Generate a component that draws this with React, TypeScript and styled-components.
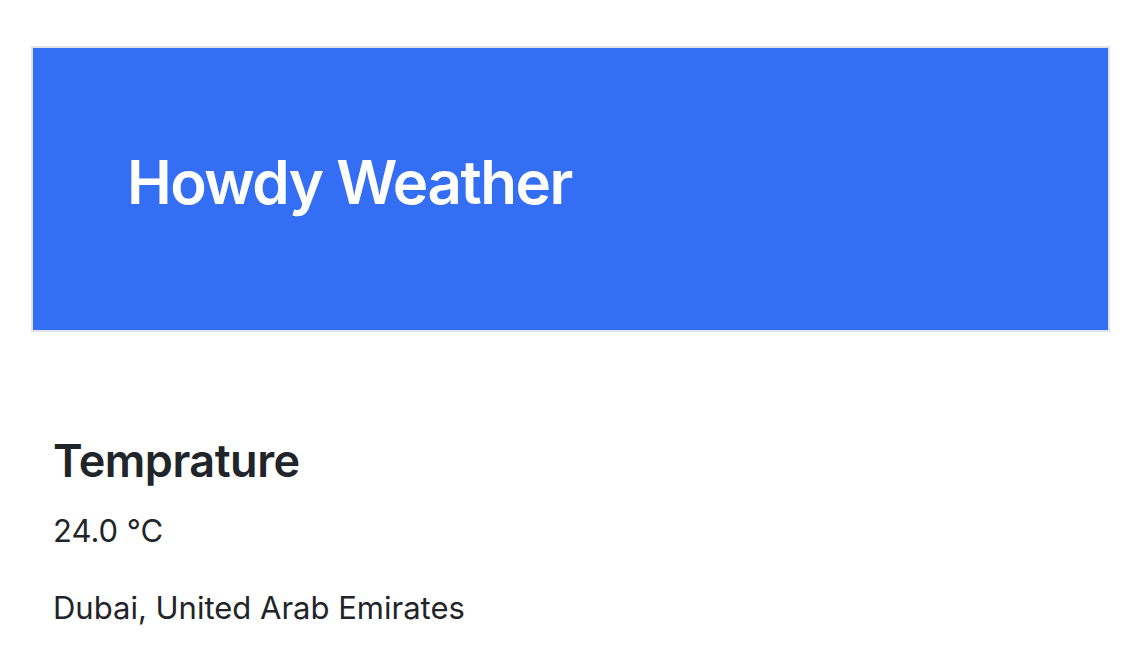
import React from "react";
import styled, { createGlobalStyle } from "styled-components";

const Global = createGlobalStyle`
  html, body { margin: 0; padding: 0; background: #ffffff; }
  body { font-family: Inter, "Noto Sans", sans-serif; color: #212529; }
`;

const Page = styled.div`
  padding: 46px 32px 0 31px;
`;

const Hero = styled.header`
  height: 286px;
  box-sizing: border-box;
  background: #346ef5;
  border: 2px solid #dfe3e9;
  display: flex;
  align-items: center;
  padding: 0 0 14px 94px;
`;

const Title = styled.h1`
  margin: 0;
  font-size: 60px;
  font-weight: 600;
  color: #ffffff;
  letter-spacing: -1.5px;
`;

const Info = styled.section`
  padding: 102px 0 0 22px;
`;

const Heading = styled.h2`
  margin: 0 0 20px;
  font-size: 45px;
  font-weight: 600;
  line-height: 1.2;
  letter-spacing: -0.5px;
`;

const Line = styled.p`
  margin: 0 0 30px;
  font-size: 31px;
  line-height: 1.5;
`;

export default function App() {
  return (
    <>
      <Global />
      <Page>
        <Hero>
          <Title>Howdy Weather</Title>
        </Hero>
        <Info>
          <Heading>Temprature</Heading>
          <Line>24.0 °C</Line>
          <Line>Dubai, United Arab Emirates</Line>
        </Info>
      </Page>
    </>
  );
}
